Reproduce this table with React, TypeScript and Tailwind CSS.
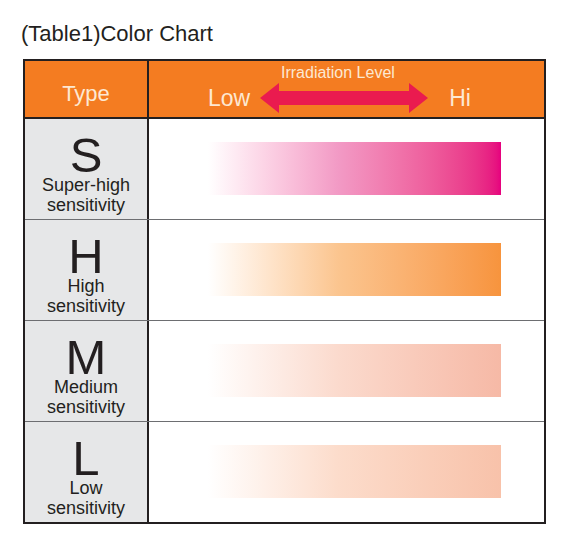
import React from "react";

const rows = [
  { letter: "S", l1: "Super-high", l2: "sensitivity", bar: "bg-linear-to-r from-white from-1% via-[#f29ac5] via-45% to-[#e6007e]" },
  { letter: "H", l1: "High", l2: "sensitivity", bar: "bg-linear-to-r from-white from-1% via-[#fbc58f] via-45% to-[#f7943d]" },
  { letter: "M", l1: "Medium", l2: "sensitivity", bar: "bg-linear-to-r from-white from-1% via-[#fbdacd] via-45% to-[#f6b9a6]" },
  { letter: "L", l1: "Low", l2: "sensitivity", bar: "bg-linear-to-r from-white from-1% via-[#fcdccb] via-45% to-[#f8c2aa]" },
];

function Arrow() {
  return (
    <svg width="168" height="30" viewBox="0 0 168 30">
      <polygon
        points="0,15 19,0 19,8 149,8 149,0 168,15 149,30 149,22 19,22 19,30"
        fill="#ea1b4f"
      />
    </svg>
  );
}

export default function App() {
  return (
    <div className="w-[567px] h-[540px] bg-white font-['Liberation_Sans',Arial,sans-serif] text-[#231f20]">
      <h1 className="pl-[21px] pt-[20px] text-[22px] leading-[28px]">(Table1)Color Chart</h1>

      <div className="ml-[23px] mt-[11px] w-[523px] border-2 border-[#231f20]">
        {/* header */}
        <div className="grid grid-cols-[124px_1fr] h-[58px] bg-[#f47c21] border-b-2 border-[#231f20]">
          <div className="border-r-2 border-[#231f20] flex items-center justify-center pt-[8px] text-[22px] text-[#fde8d2]">
            Type
          </div>
          <div className="flex flex-col">
            <div className="text-[16px] leading-[18px] pt-[3px] pl-[132px] text-[#fde8d2]">Irradiation Level</div>
            <div className="flex items-center pl-[59px] -mt-[1px] text-[23px] text-[#fde8d2]">
              <span>Low</span>
              <span className="ml-[10px] flex">
                <Arrow />
              </span>
              <span className="ml-[21px]">Hi</span>
            </div>
          </div>
        </div>

        {rows.map((r, i) => (
          <div
            key={r.letter}
            className={`grid grid-cols-[124px_1fr] ${i > 0 ? "h-[101px] border-t border-[#6d6e71]" : "h-[100px]"}`}
          >
            <div className="bg-[#e6e7e8] border-r-2 border-[#231f20] flex flex-col items-center pt-[16px]">
              <div className="text-[49px] leading-[40px]">{r.letter}</div>
              <div className="text-[18px] leading-[20px]">{r.l1}</div>
              <div className="text-[18px] leading-[20px]">{r.l2}</div>
            </div>
            <div className="pt-[23px] pl-[56px]">
              <div className={`w-[296px] h-[53px] ${r.bar}`} />
            </div>
          </div>
        ))}
      </div>
    </div>
  );
}
